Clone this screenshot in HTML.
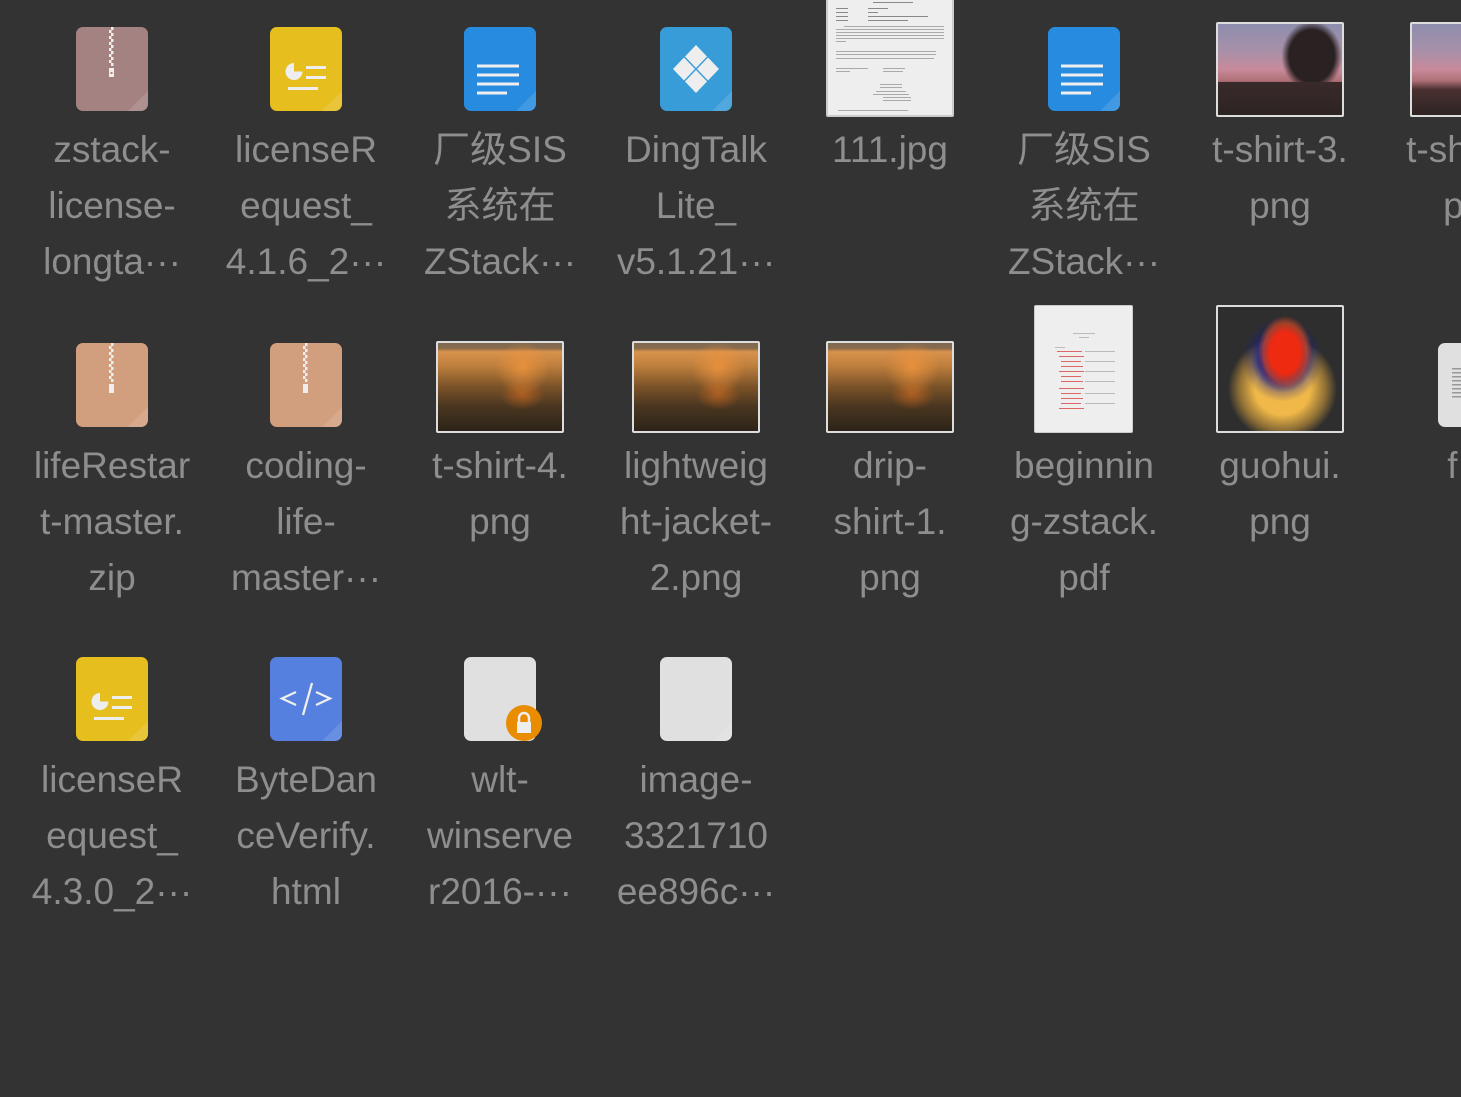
<!DOCTYPE html>
<html><head><meta charset="utf-8"><style>
html,body{margin:0;padding:0;background:#333;width:1461px;height:1097px;overflow:hidden;position:relative}
.t{position:absolute;width:200px;text-align:center;font-family:"Liberation Sans","Noto Sans CJK SC",sans-serif;font-size:37px;line-height:56px;color:#8e8e8e;white-space:nowrap}
.ic{position:absolute;width:72px;height:84px;border-radius:7px;overflow:hidden}
.ic:after{content:"";position:absolute;right:0;bottom:0;width:0;height:0;border-style:solid;border-width:0 0 20px 20px;border-color:transparent transparent rgba(255,255,255,.12) transparent}
.th{position:absolute;box-sizing:border-box;border:2px solid #ddd;border-radius:2px;overflow:hidden}
.sun{background:radial-gradient(ellipse 22% 30% at 68% 28%,rgba(245,150,60,.75),transparent),radial-gradient(ellipse 18% 18% at 68% 58%,rgba(220,110,30,.6),transparent),linear-gradient(#7d6a55 0,#8a6a4a 6%,#d8924c 10%,#c0803e 25%,#7a5228 50%,#4a3620 72%,#2c2418 100%)}
</style></head><body>

<!-- Row 1 -->
<div class="ic" style="left:76px;top:27px;background:#a58282">
 <svg width="72" height="84"><g fill="#eee"><rect x="35" y="0" width="2.5" height="3"/><rect x="33" y="3" width="2.5" height="3"/><rect x="35" y="6" width="2.5" height="3"/><rect x="33" y="9" width="2.5" height="3"/><rect x="35" y="12" width="2.5" height="3"/><rect x="33" y="15" width="2.5" height="3"/><rect x="35" y="18" width="2.5" height="3"/><rect x="33" y="21" width="2.5" height="3"/><rect x="35" y="24" width="2.5" height="3"/><rect x="33" y="27" width="2.5" height="3"/><rect x="35" y="30" width="2.5" height="3"/><rect x="33" y="33" width="2.5" height="3"/><rect x="35" y="36" width="2.5" height="3"/><rect x="33" y="41" width="5" height="9"/></g><rect x="34.5" y="45" width="2" height="2" fill="#a58282"/></svg>
</div>
<div class="ic" style="left:270px;top:27px;background:#e6bf1e">
 <svg width="72" height="84"><path d="M24 36 A8.5 8.5 0 1 0 32.5 44.5 L24 44.5 Z" fill="#eee"/><rect x="36" y="39" width="20" height="3" fill="#eee"/><rect x="36" y="49" width="20" height="3" fill="#eee"/><rect x="18" y="60" width="30" height="3" fill="#eee"/></svg>
</div>
<div class="ic" style="left:464px;top:27px;background:#278be0">
 <svg width="72" height="84"><g fill="#eee"><rect x="13" y="37.5" width="42" height="3"/><rect x="13" y="46.5" width="42" height="3"/><rect x="13" y="55.5" width="42" height="3"/><rect x="13" y="64.5" width="30" height="3"/></g></svg>
</div>
<div class="ic" style="left:660px;top:27px;background:#389cd8">
 <svg width="72" height="84"><g fill="#eee"><path d="M36 18 L47 29.5 L36 41 L25 29.5Z"/><path d="M36 43 L47 54.5 L36 66 L25 54.5Z"/><path d="M24 30.5 L35 42 L24 53.5 L13 42Z"/><path d="M48 30.5 L59 42 L48 53.5 L37 42Z"/></g></svg>
</div>
<div class="th" style="left:826px;top:-4px;width:128px;height:121px;background:#eee;border-color:#ccc">
 <svg width="124" height="117"><g fill="#888"><rect x="45" y="4" width="40" height="1"/><rect x="8" y="10" width="12" height="1"/><rect x="40" y="10" width="20" height="1"/><rect x="8" y="14" width="12" height="1"/><rect x="40" y="14" width="10" height="1"/><rect x="8" y="18" width="12" height="1"/><rect x="40" y="18" width="60" height="1"/><rect x="8" y="22" width="12" height="1"/><rect x="40" y="22" width="40" height="1"/></g>
 <g fill="#aaa"><rect x="16" y="28" width="100" height="1"/><rect x="8" y="31" width="108" height="1"/><rect x="8" y="34" width="108" height="1"/><rect x="8" y="37" width="108" height="1"/><rect x="8" y="40" width="108" height="1"/><rect x="8" y="43" width="10" height="1"/><rect x="8" y="53" width="100" height="1"/><rect x="8" y="56" width="100" height="1"/><rect x="8" y="60" width="98" height="1"/><rect x="8" y="70" width="32" height="1"/><rect x="55" y="70" width="22" height="1"/><rect x="8" y="73" width="14" height="1"/><rect x="55" y="73" width="20" height="1"/><rect x="52" y="86" width="22" height="1"/><rect x="52" y="89" width="22" height="1"/><rect x="48" y="93" width="30" height="1"/><rect x="45" y="96" width="36" height="1"/><rect x="55" y="99" width="28" height="1"/><rect x="55" y="102" width="28" height="1"/><rect x="10" y="112" width="70" height="1"/></g></svg>
</div>
<div class="ic" style="left:1048px;top:27px;background:#278be0">
 <svg width="72" height="84"><g fill="#eee"><rect x="13" y="37.5" width="42" height="3"/><rect x="13" y="46.5" width="42" height="3"/><rect x="13" y="55.5" width="42" height="3"/><rect x="13" y="64.5" width="30" height="3"/></g></svg>
</div>
<div class="th" style="left:1216px;top:22px;width:128px;height:95px;background:linear-gradient(#8e8eae 0,#a890a8 30%,#c88a9a 50%,#b07078 62%,#4a3030 72%,#2e2424 100%)">
 <div style="position:absolute;left:52px;top:-4px;width:76px;height:80px;background:radial-gradient(ellipse 50% 55% at 55% 45%,#2a2222 60%,transparent 80%)"></div>
 <div style="position:absolute;left:0;top:58px;width:128px;height:40px;background:linear-gradient(#3a2a2a,#2a2222)"></div>
</div>
<div class="th" style="left:1410px;top:22px;width:128px;height:95px;background:linear-gradient(#8e8eae 0,#a890a8 30%,#c88a9a 50%,#b07078 62%,#4a3030 72%,#2e2424 100%)"></div>

<div class="t" style="left:12px;top:122px">zstack-<br>license-<br>longta···</div>
<div class="t" style="left:206px;top:122px">licenseR<br>equest_<br>4.1.6_2···</div>
<div class="t" style="left:400px;top:122px">厂级SIS<br>系统在<br>ZStack···</div>
<div class="t" style="left:596px;top:122px">DingTalk<br>Lite_<br>v5.1.21···</div>
<div class="t" style="left:790px;top:122px">111.jpg</div>
<div class="t" style="left:984px;top:122px">厂级SIS<br>系统在<br>ZStack···</div>
<div class="t" style="left:1180px;top:122px">t-shirt-3.<br>png</div>
<div class="t" style="left:1374px;top:122px">t-shirt-4.<br>png</div>

<!-- Row 2 -->
<div class="ic" style="left:76px;top:343px;background:#d29f7e">
 <svg width="72" height="84"><g fill="#eee"><rect x="35" y="0" width="2.5" height="3"/><rect x="33" y="3" width="2.5" height="3"/><rect x="35" y="6" width="2.5" height="3"/><rect x="33" y="9" width="2.5" height="3"/><rect x="35" y="12" width="2.5" height="3"/><rect x="33" y="15" width="2.5" height="3"/><rect x="35" y="18" width="2.5" height="3"/><rect x="33" y="21" width="2.5" height="3"/><rect x="35" y="24" width="2.5" height="3"/><rect x="33" y="27" width="2.5" height="3"/><rect x="35" y="30" width="2.5" height="3"/><rect x="33" y="33" width="2.5" height="3"/><rect x="35" y="36" width="2.5" height="3"/><rect x="33" y="41" width="5" height="9"/></g></svg>
</div>
<div class="ic" style="left:270px;top:343px;background:#d29f7e">
 <svg width="72" height="84"><g fill="#eee"><rect x="35" y="0" width="2.5" height="3"/><rect x="33" y="3" width="2.5" height="3"/><rect x="35" y="6" width="2.5" height="3"/><rect x="33" y="9" width="2.5" height="3"/><rect x="35" y="12" width="2.5" height="3"/><rect x="33" y="15" width="2.5" height="3"/><rect x="35" y="18" width="2.5" height="3"/><rect x="33" y="21" width="2.5" height="3"/><rect x="35" y="24" width="2.5" height="3"/><rect x="33" y="27" width="2.5" height="3"/><rect x="35" y="30" width="2.5" height="3"/><rect x="33" y="33" width="2.5" height="3"/><rect x="35" y="36" width="2.5" height="3"/><rect x="33" y="41" width="5" height="9"/></g></svg>
</div>
<div class="th sun" style="left:436px;top:341px;width:128px;height:92px"></div>
<div class="th sun" style="left:632px;top:341px;width:128px;height:92px"></div>
<div class="th sun" style="left:826px;top:341px;width:128px;height:92px"></div>
<div class="th" style="left:1034px;top:305px;width:99px;height:128px;background:#eee;border:1px solid #ccc">
 <svg width="97" height="126"><g fill="#d66"><rect x="22" y="45" width="25" height="1"/><rect x="24" y="50" width="25" height="1"/><rect x="26" y="55" width="20" height="1"/><rect x="26" y="60" width="22" height="1"/><rect x="24" y="65" width="25" height="1"/><rect x="26" y="70" width="20" height="1"/><rect x="26" y="75" width="22" height="1"/><rect x="24" y="82" width="25" height="1"/><rect x="26" y="87" width="20" height="1"/><rect x="26" y="92" width="22" height="1"/><rect x="26" y="97" width="20" height="1"/><rect x="24" y="102" width="25" height="1"/></g><g fill="#bbb"><rect x="38" y="27" width="22" height="1"/><rect x="44" y="31" width="10" height="1"/><rect x="20" y="41" width="10" height="1"/><rect x="50" y="45" width="30" height="1"/><rect x="50" y="55" width="30" height="1"/><rect x="50" y="65" width="30" height="1"/><rect x="50" y="75" width="30" height="1"/><rect x="50" y="87" width="30" height="1"/><rect x="50" y="97" width="30" height="1"/></g></svg>
</div>
<div class="th" style="left:1216px;top:305px;width:128px;height:128px;background:radial-gradient(ellipse 22% 30% at 54% 37%,#ee2a10 55%,rgba(238,80,20,.6) 80%,transparent 100%),radial-gradient(ellipse 34% 36% at 52% 42%,#15208a 50%,rgba(20,30,140,.3) 75%,transparent 95%),radial-gradient(ellipse 44% 42% at 52% 66%,#f0b848 50%,rgba(230,170,60,.5) 80%,transparent 100%),#2e2e2e"></div>
<div class="ic" style="left:1438px;top:343px;background:#e0e0e0">
 <svg width="72" height="84"><g fill="#999"><rect x="14" y="25" width="12" height="1.5"/><rect x="14" y="29" width="12" height="1.5"/><rect x="14" y="33" width="12" height="1.5"/><rect x="14" y="37" width="12" height="1.5"/><rect x="14" y="41" width="12" height="1.5"/><rect x="14" y="45" width="12" height="1.5"/><rect x="14" y="49" width="12" height="1.5"/><rect x="14" y="53" width="12" height="1.5"/></g></svg>
</div>

<div class="t" style="left:12px;top:438px">lifeRestar<br>t-master.<br>zip</div>
<div class="t" style="left:206px;top:438px">coding-<br>life-<br>master···</div>
<div class="t" style="left:400px;top:438px">t-shirt-4.<br>png</div>
<div class="t" style="left:596px;top:438px">lightweig<br>ht-jacket-<br>2.png</div>
<div class="t" style="left:790px;top:438px">drip-<br>shirt-1.<br>png</div>
<div class="t" style="left:984px;top:438px">beginnin<br>g-zstack.<br>pdf</div>
<div class="t" style="left:1180px;top:438px">guohui.<br>png</div>
<div class="t" style="left:1374px;top:438px">f (1</div>

<!-- Row 3 -->
<div class="ic" style="left:76px;top:657px;background:#e6bf1e">
 <svg width="72" height="84"><path d="M24 36 A8.5 8.5 0 1 0 32.5 44.5 L24 44.5 Z" fill="#eee"/><rect x="36" y="39" width="20" height="3" fill="#eee"/><rect x="36" y="49" width="20" height="3" fill="#eee"/><rect x="18" y="60" width="30" height="3" fill="#eee"/></svg>
</div>
<div class="ic" style="left:270px;top:657px;background:#5580e0">
 <svg width="72" height="84"><g stroke="#eee" stroke-width="2.3" fill="none"><path d="M26 35 L12 41.5 L26 48"/><path d="M46 35 L60 41.5 L46 48"/><path d="M42 26 L33 58"/></g></svg>
</div>
<div class="ic" style="left:464px;top:657px;background:#e0e0e0"></div>
<div style="position:absolute;left:506px;top:705px;width:36px;height:36px;border-radius:50%;background:#ea8c00">
 <svg width="36" height="36"><path d="M13 17 V13 A5 5 0 0 1 23 13 V17" stroke="#eee" stroke-width="2.5" fill="none"/><rect x="11" y="17" width="14" height="11" fill="#eee"/></svg>
</div>
<div class="ic" style="left:660px;top:657px;background:#e0e0e0"></div>

<div class="t" style="left:12px;top:752px">licenseR<br>equest_<br>4.3.0_2···</div>
<div class="t" style="left:206px;top:752px">ByteDan<br>ceVerify.<br>html</div>
<div class="t" style="left:400px;top:752px">wlt-<br>winserve<br>r2016-···</div>
<div class="t" style="left:596px;top:752px">image-<br>3321710<br>ee896c···</div>

</body></html>
